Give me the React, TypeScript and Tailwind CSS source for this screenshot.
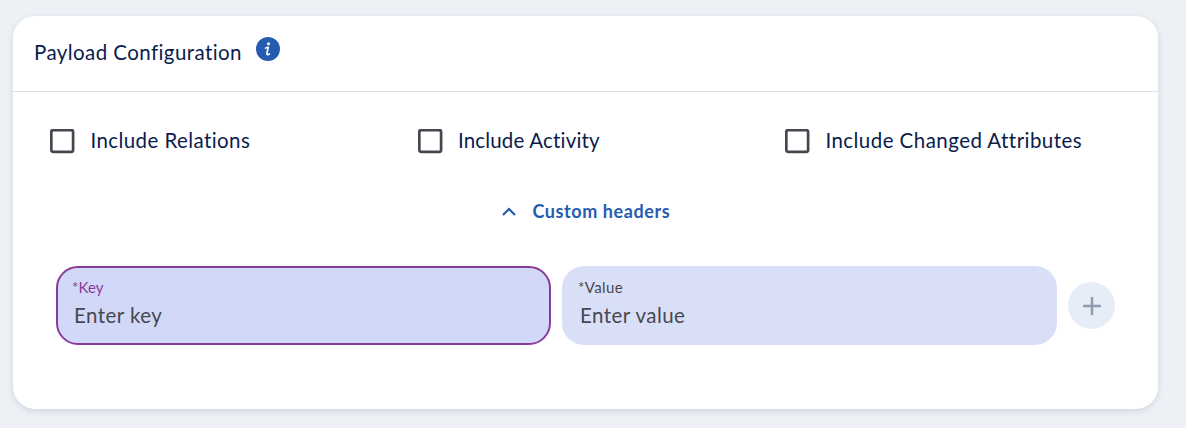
import type { ReactNode } from "react";

function Option({ className, children }: { className: string; children: ReactNode }) {
  return (
    <label className={`flex items-start ${className}`}>
      <svg className="mt-[2px] mr-[15.4px] size-[25px] shrink-0" viewBox="0 0 25 25" fill="none">
        <rect x="1.3" y="1.1" width="21.8" height="21.8" rx="1.8" stroke="#46484f" strokeWidth="2.7" />
      </svg>
      <span className="mt-px text-[20.5px] leading-6 whitespace-nowrap">{children}</span>
    </label>
  );
}

export default function App() {
  return (
    <main className="flex h-[428px] w-full bg-[#edf1f6] pt-4 pl-[13px] font-['Lato',sans-serif] text-[#0b1c4d]">
      <section className="h-[393px] w-[1145px] rounded-[22px] bg-white shadow-[0_2px_6px_rgba(60,80,100,0.17)]">
        <header className="flex h-[76px] items-start border-b border-[#d8e0e9] pt-[21px] pl-[21px]">
          <h1 className="mt-[3px] w-[221.5px] text-[20.5px] leading-6 tracking-[0.42px] whitespace-nowrap">Payload Configuration</h1>
          <svg className="size-6" viewBox="0 0 24 24">
            <circle cx="12" cy="12" r="12" fill="#265cb0" />
            <circle cx="12.5" cy="6.7" r="1.5" fill="white" />
            <path d="M9.5 11.1c1.1-.8 2-.9 2.7-.9l-1.3 6.3c-.3 1.5 1.1 1.4 2.5.4" fill="none" stroke="white" strokeWidth="1.6" strokeLinecap="round" />
          </svg>
        </header>
        <div className="flex pt-[35px] pl-[37px]">
          <Option className="w-[367.5px] tracking-[0.42px]">Include Relations</Option>
          <Option className="w-[367.5px] tracking-[0.18px]">Include Activity</Option>
          <Option className="tracking-[0.45px]">Include Changed Attributes</Option>
        </div>
        <button className="mt-[45px] ml-[488.5px] flex h-6 items-center text-[18px] leading-6 font-bold text-[#265cb0]">
          <svg className="mr-[17px] size-[14px]" viewBox="0 0 14 14" fill="none" stroke="currentColor" strokeWidth="2.2">
            <path d="m1 11 6-6 6 6" />
          </svg>
          <span className="tracking-[0.58px] whitespace-nowrap">Custom headers</span>
        </button>
        <div className="mt-[43px] ml-[43px] flex items-center gap-[11px]">
          <div className="h-[79px] w-[495px] rounded-[22px] border-2 border-[#873d97] bg-[#d2d8f8] pt-[10px] pl-[14px]">
            <div className="text-[15px] leading-[18px] tracking-[0.1px] text-[#873d97]">*Key</div>
            <div className="mt-[7px] ml-[2px] text-[20.5px] leading-6 tracking-[0.45px] text-[#46484f]">Enter key</div>
          </div>
          <div className="h-[79px] w-[495px] rounded-[22px] bg-[#dadff8] pt-[12px] pl-4">
            <div className="text-[15px] leading-[18px] tracking-[0.4px] text-[#46484f]">*Value</div>
            <div className="mt-[7px] ml-[2px] text-[20.5px] leading-6 tracking-[0.45px] text-[#46484f]">Enter value</div>
          </div>
          <button className="flex size-[47px] items-center justify-center rounded-full bg-[#e6edf6] text-[#8f9bb0]" aria-label="Add header">
            <svg className="size-[18px]" viewBox="0 0 18 18" stroke="currentColor" strokeWidth="2.5">
              <path d="M0 9h18M9 0v18" />
            </svg>
          </button>
        </div>
      </section>
    </main>
  );
}
